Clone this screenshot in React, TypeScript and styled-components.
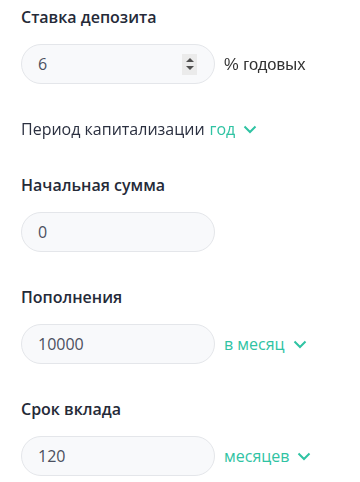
import { useState } from "react";
import styled, { createGlobalStyle } from "styled-components";

const GlobalStyle = createGlobalStyle`
    body {
        margin: 0;
        background: #ffffff;
        font-family: "Open Sans", "Noto Sans", sans-serif;
        color: #1f2433;
    }
`;

const Form = styled.div`
    display: flex;
    flex-direction: column;
    gap: 34px;
    padding: 6px 0 0 21px;
`;

const Field = styled.div`
    display: flex;
    flex-direction: column;
    gap: 16px;
`;

const Label = styled.div`
    font-size: 16px;
    line-height: 22px;
    font-weight: 600;
    color: #252a38;
`;

const Row = styled.div`
    display: flex;
    align-items: center;
    gap: 9px;
`;

const InputBox = styled.div`
    box-sizing: border-box;
    width: 194px;
    height: 40px;
    display: flex;
    align-items: center;
    padding: 0 17px 0 16px;
    background: #f8f9fb;
    border: 1px solid #e4e6ea;
    border-radius: 20px;
`;

const Input = styled.input`
    flex: 1;
    min-width: 0;
    border: none;
    outline: none;
    background: transparent;
    font-family: "Open Sans", "Noto Sans", sans-serif;
    font-size: 16px;
    color: #4b5060;
    caret-color: #1f2a55;
    padding: 0;
`;

const Spinner = styled.div`
    width: 15px;
    height: 21px;
    background: #ebebeb;
    display: flex;
    flex-direction: column;
    align-items: center;
    justify-content: center;
    gap: 4px;
`;

const Arrow = styled.div<{ $up?: boolean }>`
    width: 0;
    height: 0;
    border-left: 4px solid transparent;
    border-right: 4px solid transparent;
    ${(p) => (p.$up ? "border-bottom: 4px solid #505050;" : "border-top: 4px solid #505050;")}
`;

const Suffix = styled.span`
    font-family: "Liberation Sans", Arial, sans-serif;
    font-size: 16.5px;
    color: #333333;
`;

const Select = styled.span`
    display: inline-flex;
    align-items: center;
    gap: 8px;
    font-size: 16px;
    color: #2fc3a3;
    cursor: pointer;
`;

const Period = styled.div`
    font-size: 16px;
    line-height: 22px;
    color: #2b3040;
    display: flex;
    align-items: center;
    gap: 5px;
`;

function Chevron() {
    return (
        <svg width="14" height="9" viewBox="0 0 14 9">
            <path d="M1.5 1.5 L7 7 L12.5 1.5" fill="none" stroke="#2fc3a3" strokeWidth="2" />
        </svg>
    );
}

export default function App() {
    const [rate, setRate] = useState("6");
    const [start, setStart] = useState("0");
    const [monthly, setMonthly] = useState("10000");
    const [term, setTerm] = useState("120");

    return (
        <>
            <GlobalStyle />
            <Form>
                <Field>
                    <Label>Ставка депозита</Label>
                    <Row>
                        <InputBox>
                            <Input autoFocus value={rate} onChange={(e) => setRate(e.target.value)} />
                            <Spinner>
                                <Arrow $up />
                                <Arrow />
                            </Spinner>
                        </InputBox>
                        <Suffix>% годовых</Suffix>
                    </Row>
                </Field>

                <Period>
                    Период капитализации
                    <Select>
                        год <Chevron />
                    </Select>
                </Period>

                <Field>
                    <Label>Начальная сумма</Label>
                    <Row>
                        <InputBox>
                            <Input value={start} onChange={(e) => setStart(e.target.value)} />
                        </InputBox>
                    </Row>
                </Field>

                <Field>
                    <Label>Пополнения</Label>
                    <Row>
                        <InputBox>
                            <Input value={monthly} onChange={(e) => setMonthly(e.target.value)} />
                        </InputBox>
                        <Select>
                            в месяц <Chevron />
                        </Select>
                    </Row>
                </Field>

                <Field>
                    <Label>Срок вклада</Label>
                    <Row>
                        <InputBox>
                            <Input value={term} onChange={(e) => setTerm(e.target.value)} />
                        </InputBox>
                        <Select>
                            месяцев <Chevron />
                        </Select>
                    </Row>
                </Field>
            </Form>
        </>
    );
}
